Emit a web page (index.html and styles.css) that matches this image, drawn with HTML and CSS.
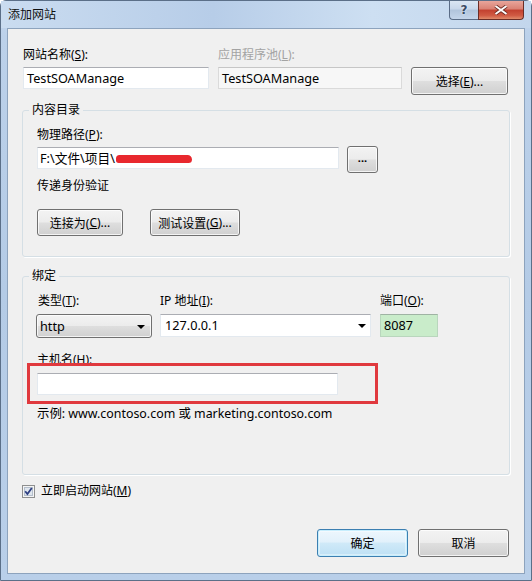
FILE: index.html
```html
<!DOCTYPE html>
<html lang="zh-CN">
<head>
<meta charset="utf-8">
<title>添加网站</title>
<link rel="stylesheet" href="styles.css">
</head>
<body>
<div class="window">
  <div class="titlebar">
    <span class="title">添加网站</span>
    <div class="caption">
      <span class="cap help">?</span>
      <span class="cap close">
        <svg width="16" height="10" viewBox="0 0 16 10"><path d="M2.5 1 L13.5 9 M13.5 1 L2.5 9" stroke="#6b2a22" stroke-width="3.6" fill="none"/><path d="M2.5 1 L13.5 9 M13.5 1 L2.5 9" stroke="#fff" stroke-width="2" fill="none"/></svg>
      </span>
    </div>
  </div>
  <div class="client">
    <div class="row1">
      <div class="field w-name">
        <div class="lbl">网站名称(<u>S</u>):</div>
        <div class="input">TestSOAManage</div>
      </div>
      <div class="field w-pool">
        <div class="lbl disabled">应用程序池(<u>L</u>):</div>
        <div class="input is-disabled">TestSOAManage</div>
      </div>
      <div class="btn btn-select">选择(<u>E</u>)...</div>
    </div>

    <fieldset class="group g-content">
      <legend>内容目录</legend>
      <div class="lbl">物理路径(<u>P</u>):</div>
      <div class="path-row">
        <div class="input path">F:\文件\项目\<span class="redact"></span></div>
        <div class="btn btn-browse">...</div>
      </div>
      <div class="lbl passthru">传递身份验证</div>
      <div class="btn-row">
        <div class="btn btn-connect">连接为(<u>C</u>)...</div>
        <div class="btn btn-test">测试设置(<u>G</u>)...</div>
      </div>
    </fieldset>

    <fieldset class="group g-binding">
      <legend>绑定</legend>
      <div class="bind-row">
        <div class="col col-type">
          <div class="lbl">类型(<u>T</u>):</div>
          <div class="combo">http<span class="arrow"></span></div>
        </div>
        <div class="col col-ip">
          <div class="lbl">IP 地址(<u>I</u>):</div>
          <div class="input ip">127.0.0.1<span class="arrow"></span></div>
        </div>
        <div class="col col-port">
          <div class="lbl">端口(<u>O</u>):</div>
          <div class="input port">8087</div>
        </div>
      </div>
      <div class="lbl host-lbl">主机名(<u>H</u>):</div>
      <div class="input host"></div>
      <div class="lbl example">示例: www.contoso.com 或 marketing.contoso.com</div>
    </fieldset>

    <div class="check-row">
      <svg class="checkbox" width="13" height="13" viewBox="0 0 13 13">
        <rect x="0.5" y="0.5" width="12" height="12" fill="#f4f4f4" stroke="#8e8f8f"/>
        <rect x="2.5" y="2.5" width="8" height="8" fill="#dfe6ee" stroke="#b5bfcc"/>
        <path d="M3.2 6.2 L5.4 9 L9.8 3" stroke="#2e3f82" stroke-width="1.8" fill="none"/>
      </svg>
      <span class="check-lbl">立即启动网站(<u>M</u>)</span>
    </div>

    <div class="footer">
      <div class="btn btn-ok">确定</div>
      <div class="btn btn-cancel">取消</div>
    </div>

    <div class="annotation"></div>
  </div>
</div>
</body>
</html>
```

FILE: styles.css
```css
* { box-sizing: border-box; }
html, body { margin: 0; padding: 0; }
body {
  width: 532px;
  height: 581px;
  background: #ffffff;
  font-family: "Noto Sans", "Noto Sans CJK SC", sans-serif;
  font-size: 12px;
  color: #000;
  overflow: hidden;
}
u { text-decoration: underline; text-underline-offset: 1px; }

.window {
  width: 532px;
  height: 581px;
  border: 1px solid #5b6f88;
  border-radius: 6px 6px 0 0;
  background: linear-gradient(180deg, #c6d8ee 0%, #bcd1ea 6%, #b4cbe6 50%, #b9cfe9 100%);
  display: flex;
  flex-direction: column;
  align-items: center;
}

.titlebar {
  width: 100%;
  height: 27px;
  display: flex;
  justify-content: space-between;
  align-items: flex-start;
  background: linear-gradient(90deg, #cadcf0 0%, #b7cde8 40%, #cddff2 70%, #c3d6ec 100%);
}
.title {
  padding-left: 7px;
  padding-top: 6px;
  line-height: 16px;
  font-size: 12px;
  color: #111;
}
.caption {
  display: flex;
  margin-right: 7px;
}
.cap {
  height: 19px;
  display: flex;
  align-items: center;
  justify-content: center;
  border: 1px solid #5a6c86;
  border-top: none;
}
.help {
  width: 29px;
  border-radius: 0 0 0 4px;
  background: linear-gradient(180deg, #dbe6f3 0%, #c8d7ea 45%, #b1c4dc 50%, #c4d5ea 100%);
  color: #3a4a63;
  font-family: "DejaVu Sans", sans-serif;
  font-weight: bold;
  font-size: 12px;
  text-shadow: 0 0 2px #fff;
  border-right: none;
}
.close {
  width: 46px;
  border-radius: 0 0 4px 0;
  background: linear-gradient(180deg, #e8a59b 0%, #d98173 45%, #c2402f 50%, #d05a43 80%, #e08a6a 100%);
  border-color: #6b2d26;
}

.client {
  position: relative;
  width: 518px;
  height: 546px;
  border: 1px solid #8da3bd;
  background: #f0f0f0;
  padding: 18px 14px 0 14px;
}

.lbl {
  line-height: 16px;
  white-space: nowrap;
}
.lbl.disabled { color: #a3a3a3; }

.input {
  height: 22px;
  background: #fff;
  border: 1px solid #e3e9ef;
  border-top-color: #abadb3;
  padding: 0 3px;
  line-height: 20px;
  font-size: 12.7px;
  white-space: nowrap;
  position: relative;
}
.input.is-disabled {
  background: #f7f7f7;
  border-color: #dadada;
  border-top-color: #c6c6c6;
}

.btn {
  height: 28px;
  display: flex;
  align-items: center;
  justify-content: center;
  border: 1px solid #707070;
  border-radius: 3px;
  background: linear-gradient(180deg, #f3f3f3 0%, #ececec 48%, #dedede 52%, #d0d0d0 100%);
  box-shadow: inset 0 0 0 1px rgba(255,255,255,0.75);
  white-space: nowrap;
}

.row1 {
  display: flex;
  align-items: flex-start;
  margin-left: 1px;
}
.field .lbl { margin-bottom: 4px; }
.w-name { width: 186px; }
.w-pool { width: 184px; margin-left: 9px; }
.btn-select { width: 97px; margin-left: 9px; margin-top: 20px; }

.group {
  margin: 0;
  width: 488px;
  border: 1px solid #d5dfe5;
  border-radius: 3px;
  box-shadow: 1px 1px 0 #ffffff;
  padding: 9px 14px 20px 14px;
  min-width: 0;
}
.group legend {
  line-height: 16px;
  padding: 0 3px;
  margin-left: -8px;
}
.g-content { margin-top: 7px; }
.g-content > .lbl:first-of-type { margin-bottom: 4px; }

.path-row {
  display: flex;
  align-items: flex-start;
}
.path { width: 302px; padding-left: 2px; }
.redact {
  display: inline-block;
  width: 76px;
  height: 8px;
  margin-left: 1px;
  vertical-align: 0px;
  background: #e8282e;
  border-radius: 4px 5px 4px 3px;
}
.btn-browse {
  width: 31px;
  height: 27px;
  margin-left: 8px;
  margin-top: -1px;
  font-size: 11px;
  font-weight: bold;
  padding-bottom: 4px;
}
.passthru { margin-top: 5px; }
.btn-row {
  display: flex;
  margin-top: 15px;
}
.btn-connect { width: 86px; height: 27px; }
.btn-test { width: 90px; height: 27px; margin-left: 27px; }

.g-binding {
  margin-top: 11px;
  padding-bottom: 52px;
}
.bind-row {
  display: flex;
  align-items: flex-start;
}
.col .lbl { margin-bottom: 5px; }
.col-type { width: 115px; }
.col-type .lbl { padding-left: 1px; }
.col-ip { width: 211px; margin-left: 8px; }
.col-port { width: 58px; margin-left: 9px; }

.combo {
  position: relative;
  margin-left: -1px;
  width: 116px;
  height: 24px;
  border: 1px solid #707070;
  border-radius: 3px;
  background: linear-gradient(180deg, #f3f3f3 0%, #ececec 48%, #dedede 52%, #d0d0d0 100%);
  box-shadow: inset 0 0 0 1px rgba(255,255,255,0.75);
  padding-left: 3px;
  line-height: 22px;
  font-size: 12.7px;
}
.arrow {
  position: absolute;
  top: 10px;
  right: 6px;
  width: 0;
  height: 0;
  border-left: 4px solid transparent;
  border-right: 4px solid transparent;
  border-top: 4px solid #000;
}
.ip { margin-top: 1px; height: 23px; line-height: 21px; padding-left: 4px; }
.ip .arrow { top: 9px; right: 4px; }
.port {
  height: 23px;
  line-height: 21px;
  background: #c9ecca;
  border-color: #b9d6bd;
  border-top-color: #9fb3a3;
}

.host-lbl { margin-top: 14px; }
.host { width: 301px; margin-top: 5px; }
.example { margin-top: 11px; font-size: 12.4px; }

.check-row {
  display: flex;
  align-items: center;
  margin-top: 8px;
  height: 16px;
}
.checkbox { display: block; margin-left: 0; }
.check-lbl { margin-left: 6px; line-height: 16px; }

.footer {
  display: flex;
  justify-content: flex-end;
  margin-top: 30px;
  margin-right: 1px;
}
.btn-ok {
  width: 91px;
  border-color: #3c7fb1;
  background: linear-gradient(180deg, #edf7fd 0%, #e2f1fb 45%, #cfe9f8 52%, #bde0f4 100%);
  box-shadow: inset 0 0 0 1px #c7eefd, inset 0 0 0 2px rgba(255,255,255,0.4);
}
.btn-cancel { width: 91px; margin-left: 10px; }

.annotation {
  position: absolute;
  left: 19px;
  top: 334px;
  width: 351px;
  height: 41px;
  border: 3px solid #e0393e;
  pointer-events: none;
}
```
